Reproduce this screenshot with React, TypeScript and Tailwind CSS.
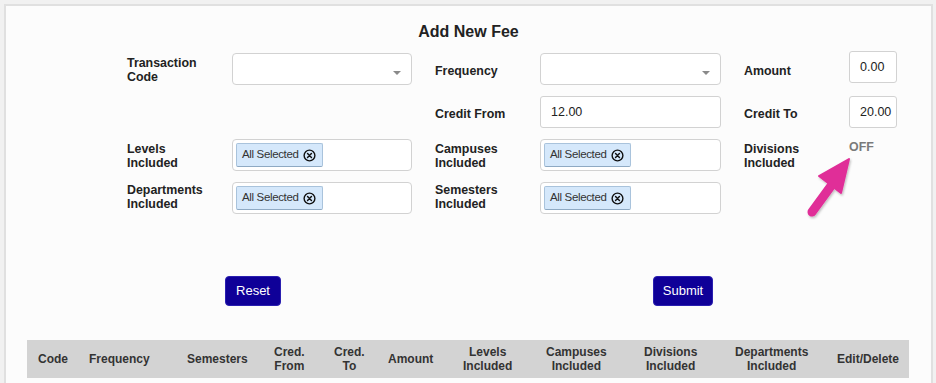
import React from 'react';

const font = { fontFamily: '"Liberation Sans", Arial, sans-serif' };

const Label: React.FC<{ lines: string[]; indent?: boolean; shift?: string }> = ({ lines, indent, shift }) => (
  <div className={`flex items-center ${shift ?? 'pt-[3px]'} ${indent ? 'pl-[23px]' : ''}`}>
    <div className="text-[12.4px] font-bold leading-[14px] text-[#222]">
      {lines.map((l) => (
        <div key={l}>{l}</div>
      ))}
    </div>
  </div>
);

const Select: React.FC = () => (
  <div className="relative h-[32px] rounded-[4px] border border-[#d2d2d2] bg-white">
    <span className="absolute right-[10px] top-[17px] h-0 w-0 border-x-[4px] border-t-[4px] border-x-transparent border-t-[#8a8a8a]" />
  </div>
);

const TextInput: React.FC<{ value: string; className?: string }> = ({ value, className }) => (
  <div
    className={`flex h-[32px] items-center overflow-hidden whitespace-nowrap rounded-[3px] border border-[#d2d2d2] bg-white pl-[10px] text-[12.5px] text-[#222] ${className ?? ''}`}
  >
    {value}
  </div>
);

const CircleX = () => (
  <svg width="13" height="13" viewBox="0 0 14 14" className="shrink-0">
    <circle cx="7" cy="7" r="5.8" fill="none" stroke="#111" strokeWidth="1.5" />
    <path d="M4.9 4.9 L9.1 9.1 M9.1 4.9 L4.9 9.1" stroke="#111" strokeWidth="1.6" strokeLinecap="round" />
  </svg>
);

const Multi: React.FC = () => (
  <div className="h-[32px] rounded-[4px] border border-[#d2d2d2] bg-white p-[3px]">
    <div className="flex h-[24px] w-[87px] items-center gap-[4px] rounded-[2px] border border-[#a9c3dc] border-b-[#8ea9c3] bg-[#d5e8fb] pl-[5px] text-[11.5px] tracking-[-0.35px] text-[#333]">
      <span>All Selected</span>
      <CircleX />
    </div>
  </div>
);

const headers: { lines: string[] }[] = [
  { lines: ['Code'] },
  { lines: ['Frequency'] },
  { lines: ['Semesters'] },
  { lines: ['Cred.', 'From'] },
  { lines: ['Cred.', 'To'] },
  { lines: ['Amount'] },
  { lines: ['Levels', 'Included'] },
  { lines: ['Campuses', 'Included'] },
  { lines: ['Divisions', 'Included'] },
  { lines: ['Departments', 'Included'] },
  { lines: ['Edit/Delete'] },
];

export default function App() {
  return (
    <div className="h-[383px] overflow-hidden bg-[#f1f1f1] pl-[4px] pr-[3px] pt-[4px]" style={font}>
      <div className="relative h-[420px] border-2 border-[#e0e0e0] bg-[#fcfcfc]">
        <h1 className="pt-[16px] text-center text-[16px] font-bold leading-[20px] text-[#222]">Add New Fee</h1>

        <div className="mt-[11px] grid grid-cols-[105px_180px_128px_181px_128px_48px] grid-rows-[32px_32px_32px_32px] gap-y-[11px] pl-[121px]">
          <Label lines={['Transaction', 'Code']} shift="pt-[2px]" />
          <Select />
          <Label lines={['Frequency']} indent />
          <Select />
          <Label lines={['Amount']} indent />
          <TextInput value="0.00" className="-mt-[2px] pl-[8px]" />

          <div />
          <div />
          <Label lines={['Credit From']} indent shift="pt-[4px]" />
          <TextInput value="12.00" />
          <Label lines={['Credit To']} indent shift="pt-[4px]" />
          <TextInput value="20.00" className="pl-[8px]" />

          <Label lines={['Levels', 'Included']} shift="pt-[1px]" />
          <Multi />
          <Label lines={['Campuses', 'Included']} indent shift="pt-[1px]" />
          <Multi />
          <Label lines={['Divisions', 'Included']} indent shift="pt-[1px]" />
          <div className="pt-[1px] text-[12.4px] font-bold leading-[14px] text-[#7a7a7a]">OFF</div>

          <Label lines={['Departments', 'Included']} shift="pb-[3px]" />
          <Multi />
          <Label lines={['Semesters', 'Included']} indent shift="pb-[3px]" />
          <Multi />
        </div>

        <div className="mt-[62px] flex pl-[219px]">
          <button className="h-[30px] w-[56px] rounded-[4px] border border-[#2a1fb0] bg-[#0f0098] text-[13px] text-white">
            Reset
          </button>
          <button className="ml-[372px] h-[30px] w-[60px] rounded-[4px] border border-[#2a1fb0] bg-[#0f0098] text-[13px] text-white">
            Submit
          </button>
        </div>

        <div className="ml-[21px] mt-[34px] grid h-[38px] w-[882px] grid-cols-[62px_98px_87px_60px_54px_75px_83px_98px_91px_102px_72px] items-center bg-[#d3d3d3] text-[12px] font-bold leading-[14px] text-[#333]">
          {headers.map((h, i) => (
            <div key={i} className={i === 0 ? 'pl-[11px]' : ''}>
              <span className="inline-block text-center">
                {h.lines.map((l) => (
                  <div key={l}>{l}</div>
                ))}
              </span>
            </div>
          ))}
        </div>

        {/* pink pointer arrow */}
        <svg className="absolute left-[794px] top-[148px]" width="60" height="66" viewBox="0 0 60 66">
          <defs>
            <filter id="sh" x="-20%" y="-20%" width="140%" height="140%">
              <feDropShadow dx="1" dy="1.5" stdDeviation="1.2" floodColor="#000" floodOpacity="0.25" />
            </filter>
          </defs>
          <g filter="url(#sh)">
            <path d="M12 58 L31 32" stroke="#e02e98" strokeWidth="9" strokeLinecap="round" />
            <path d="M49 5 L19 22 L41 39 Z" fill="#e02e98" strokeLinejoin="round" stroke="#e02e98" strokeWidth="2" />
          </g>
        </svg>
      </div>
    </div>
  );
}
